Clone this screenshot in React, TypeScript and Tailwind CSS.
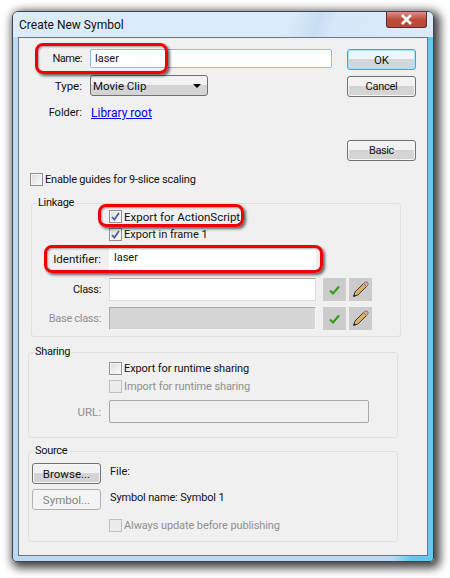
import type { ReactNode } from "react";
import clsx from "clsx";

function Check({ checked, disabled }: { checked?: boolean; disabled?: boolean }) {
  return (
    <span
      className={clsx(
        "flex h-[13px] w-[13px] shrink-0 items-center justify-center border",
        disabled ? "border-[#c0c0c0] bg-[#ececec]" : "border-[#8e8f8f] bg-gradient-to-br from-[#dcdcdc] to-[#fbfbfb] shadow-[inset_0_0_0_1px_#f4f4f4]"
      )}
    >
      {checked && (
        <svg width="9" height="9" viewBox="0 0 9 9">
          <path d="M1 5 L3.4 7.6 L8 1" fill="none" stroke="#4a5f97" strokeWidth="1.7" />
        </svg>
      )}
    </span>
  );
}

function CheckRow({ label, checked, disabled, className }: { label: string; checked?: boolean; disabled?: boolean; className?: string }) {
  return (
    <div className={clsx("flex h-[13px] items-center gap-[2px]", disabled && "text-[#8f8f8f]", className)}>
      <Check checked={checked} disabled={disabled} />
      <span className="whitespace-nowrap">{label}</span>
    </div>
  );
}

function Btn({ children, variant, className }: { children: ReactNode; variant?: "ok" | "off"; className?: string }) {
  return (
    <div
      className={clsx(
        "flex h-[21px] w-[69px] items-center justify-center rounded-[3px] border",
        variant === "ok" && "border-[#3aa9d8] bg-gradient-to-b from-[#eef6f9] from-50% to-[#d2d8da] to-50% shadow-[inset_0_0_0_1px_#a9e2f5]",
        variant === "off" && "border-[#adb2b5] bg-[#f4f4f4] text-[#838383]",
        !variant && "border-[#707070] bg-gradient-to-b from-[#f2f2f2] from-50% to-[#d4d4d4] to-50% shadow-[inset_0_0_0_1px_#f6f6f6]",
        className
      )}
    >
      {children}
    </div>
  );
}

function Group({ title, className, children }: { title: string; className?: string; children: ReactNode }) {
  return (
    <div className={clsx("relative w-[370px] rounded-[3px] border border-[#dce0e5]", className)}>
      <span className="absolute top-[-9px] left-[5px] bg-[#f0f0f0] px-[1px] leading-[16px] tracking-[-0.3px]">{title}</span>
      {children}
    </div>
  );
}

function FieldRow({ label, disabled, className, labelClass, children }: { label: string; disabled?: boolean; className?: string; labelClass: string; children: ReactNode }) {
  return (
    <div className={clsx("flex items-center", className)}>
      <span className={clsx("mr-[8px] text-right", labelClass, disabled && "text-[#8f8f8f]")}>{label}</span>
      {children}
    </div>
  );
}

function Tick() {
  return (
    <span className="flex h-[23px] w-[23px] items-center justify-center bg-[#cbcbcb]">
      <svg width="11" height="10" viewBox="0 0 11 10">
        <path d="M1 5.5 L4 8.5 L10 1.5" fill="none" stroke="#2f9a12" strokeWidth="2" />
      </svg>
    </span>
  );
}

function Pencil() {
  return (
    <span className="flex h-[23px] w-[23px] items-center justify-center bg-[#cbcbcb]">
      <svg width="19" height="19" viewBox="0 0 19 19">
        <path d="M4 12 L13.5 2.5 L16.5 5.5 L7 15 L2.5 16.5 Z" fill="#dcae6c" stroke="#3a3a3a" strokeWidth="1" />
        <path d="M12.5 3.5 L13.5 2.5 Q15 1 16.5 2.5 Q18 4 16.5 5.5 L15.5 6.5 Z" fill="#e6a6a6" stroke="#777777" strokeWidth="1" />
        <path d="M2.5 16.5 L3.3 14 L5 15.7 Z" fill="#222222" />
      </svg>
    </span>
  );
}

function Red({ className }: { className: string }) {
  return <div className={clsx("absolute rounded-[8px] border-[3px] border-[#f00000] shadow-[2px_2px_3px_rgba(0,0,0,0.6),inset_1px_1px_2px_rgba(0,0,0,0.35)]", className)} />;
}

export default function App() {
  return (
    <div
      className="relative h-[578px] w-[450px] overflow-hidden bg-white pt-[11px] pl-[12px] text-[11px] leading-[16px] text-[#111111]"
      style={{ fontFamily: "Roboto, sans-serif" }}
    >
      {/* window frame */}
      <div className="h-[551px] w-[422px] rounded-t-[6px] rounded-b-[4px] border border-[#3b4650] bg-gradient-to-r from-[#bcd9ef] from-90% to-[#62c8f2] to-95% shadow-[3px_3px_10px_3px_rgba(0,0,0,0.75)]">
        <div className="flex h-[25px] items-start justify-between rounded-t-[5px] bg-[linear-gradient(110deg,#dcebf9_0%,#dcebf9_65%,#c9def3_72%,#d6e8fa_76%,#dcebf9_100%)]">
          <span className="pt-[5px] pl-[6px] text-[12px]">Create New Symbol</span>
          <div className="mr-[6px] flex h-[16px] w-[41px] items-center justify-center rounded-b-[3px] border border-t-0 border-[#5a2a24] bg-gradient-to-b from-[#d9908a] via-[#bf4a3c] to-[#b8483a]">
            <svg width="13" height="11" viewBox="0 0 13 11">
              <path d="M2 1 L11 10 M11 1 L2 10" stroke="#ffffff" strokeWidth="2.6" />
            </svg>
          </div>
        </div>

        {/* client area */}
        <div className="mx-[5px] h-[519px] w-[410px] border border-[#6b7782] bg-[#f0f0f0]">
          <div className="flex pt-[11px]">
            <div className="w-[313px]">
              <FieldRow label="Name:" labelClass="w-[63px] tracking-[-0.5px]">
                <div className="flex h-[19px] w-[242px] items-center rounded-[2px] border border-[#8cc0e0] bg-white pl-[4px]">laser</div>
              </FieldRow>
              <FieldRow label="Type:" labelClass="w-[63px] text-[11.5px]" className="mt-[7px]">
                <div className="flex h-[21px] w-[118px] items-center justify-between rounded-[3px] border border-[#707070] bg-gradient-to-b from-[#f2f2f2] from-50% to-[#d4d4d4] to-50% pr-[6px] pl-[2px] text-[11.5px]">
                  Movie Clip
                  <span className="h-0 w-0 border-x-[4px] border-t-[4px] border-x-transparent border-t-black" />
                </div>
              </FieldRow>
              <FieldRow label="Folder:" labelClass="w-[63px]" className="mt-[9px]">
                <a className="ml-[1px] text-[12px] text-[#0000e6] underline">Library root</a>
              </FieldRow>
            </div>
            <div className="ml-[15px]">
              <Btn variant="ok" className="text-[11.5px]">OK</Btn>
              <Btn className="mt-[6px] tracking-[-0.25px]">Cancel</Btn>
              <Btn className="mt-[43px] tracking-[-0.4px]">Basic</Btn>
            </div>
          </div>
          <div className="tracking-[-0.2px]">
            <CheckRow label="Enable guides for 9-slice scaling" className="mt-[12px] ml-[11px]" />
          </div>

          <Group title="Linkage" className="mt-[17px] ml-[12px] h-[134px] w-[367px]">
            <div className="text-[11.5px]">
              <CheckRow label="Export for ActionScript" checked className="mt-[6px] ml-[77px]" />
            </div>
            <CheckRow label="Export in frame 1" checked className="mt-[5px] ml-[77px]" />
            <FieldRow label="Identifier:" labelClass="w-[69px] text-[11.5px]" className="mt-[7px]">
              <div className="flex h-[22px] w-[207px] items-center bg-white pb-[3px] pl-[5px]">laser</div>
            </FieldRow>
            <FieldRow label="Class:" labelClass="w-[69px] tracking-[-0.3px]" className="mt-[8px]">
              <div className="h-[23px] w-[207px] border border-[#dddddd] border-t-[#aaaaaa] bg-white" />
              <span className="ml-[7px]"><Tick /></span>
              <span className="ml-[3px]"><Pencil /></span>
            </FieldRow>
            <FieldRow label="Base class:" disabled labelClass="w-[69px] tracking-[-0.3px]" className="mt-[6px]">
              <div className="h-[23px] w-[207px] border border-[#f4f4f4] border-t-[#aaaaaa] border-l-[#aaaaaa] bg-[#d6d6d6]" />
              <span className="ml-[7px]"><Tick /></span>
              <span className="ml-[3px]"><Pencil /></span>
            </FieldRow>
          </Group>

          <Group title="Sharing" className="mt-[15px] ml-[9px] h-[86px]">
            <div className="tracking-[-0.1px]">
              <CheckRow label="Export for runtime sharing" className="mt-[9px] ml-[80px]" />
              <CheckRow label="Import for runtime sharing" disabled className="mt-[5px] ml-[80px]" />
            </div>
            <FieldRow label="URL:" disabled labelClass="w-[72px] text-[11.5px]" className="mt-[7px]">
              <div className="h-[23px] w-[260px] rounded-[2px] border border-[#a8a8a8]" />
            </FieldRow>
          </Group>

          <Group title="Source" className="mt-[13px] ml-[9px] h-[91px]">
            <div className="flex pt-[11px] pl-[3px]">
              <div className="text-[11.5px]">
                <Btn>Browse...</Btn>
                <Btn variant="off" className="mt-[5px]">Symbol...</Btn>
              </div>
              <div className="ml-[9px]">
                <div className="pt-[1px]">File:</div>
                <div className="mt-[10px] tracking-[-0.15px]">Symbol name: Symbol 1</div>
              </div>
            </div>
            <div className="tracking-[-0.1px]">
              <CheckRow label="Always update before publishing" disabled className="mt-[9px] ml-[80px]" />
            </div>
          </Group>
        </div>
      </div>

      {/* red annotations */}
      <Red className="top-[43px] left-[35px] h-[31px] w-[133px]" />
      <Red className="top-[204px] left-[98px] h-[23px] w-[146px]" />
      <Red className="top-[245px] left-[44px] h-[28px] w-[279px]" />
    </div>
  );
}
